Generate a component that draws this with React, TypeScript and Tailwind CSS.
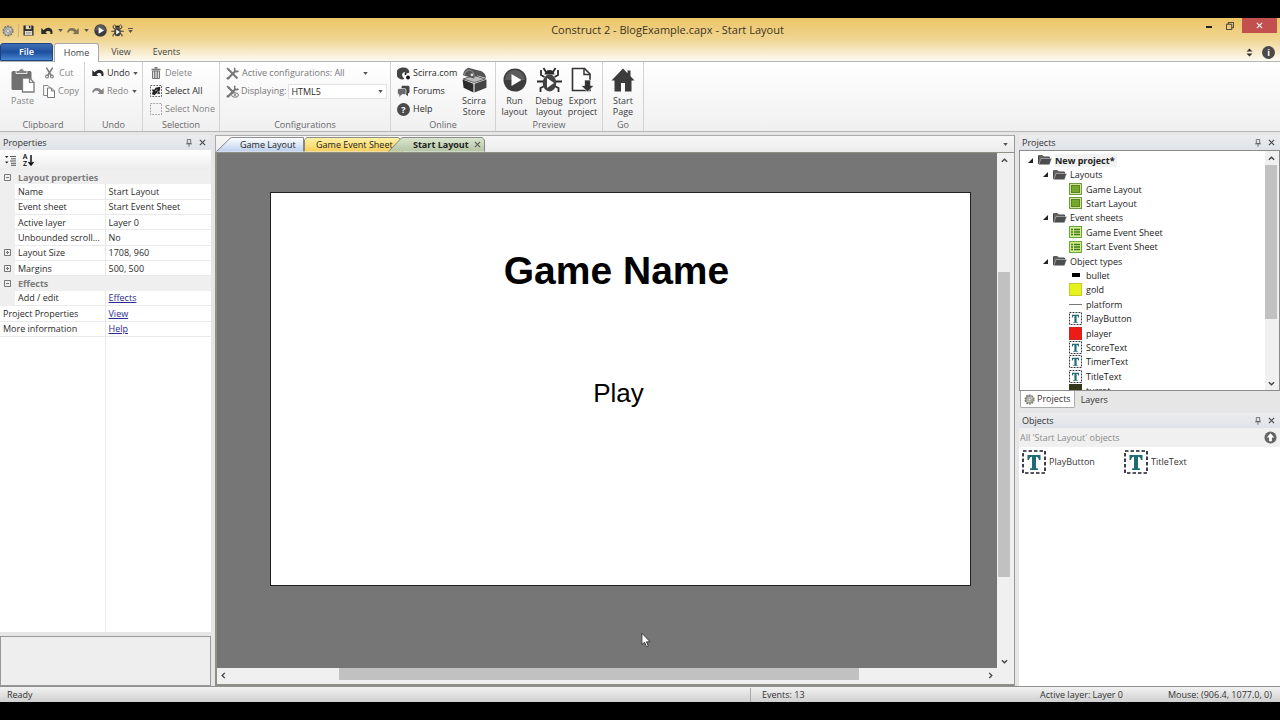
import React from "react";
import clsx from "clsx";

type IconProps = { className?: string };

function GearIcon({ className }: IconProps) {
  return (
    <svg viewBox="0 0 16 16" className={className}>
      <circle cx="8" cy="8" r="6.2" fill="#b5b5b0" stroke="#77756c" strokeWidth="2.4" strokeDasharray="2.4 1.5" />
      <circle cx="8" cy="8" r="5.4" fill="#c9c9c6" stroke="#7c7c78" strokeWidth="0.8" />
      <path d="M4 10a4.6 4.6 0 0 1 6-6M8 12.500a4.600 4.600 0 0 0 4-5" fill="none" stroke="#8b8b88" strokeWidth="1.300" />
      <circle cx="8" cy="8" r="2" fill="#f4f4f4" stroke="#777" strokeWidth="0.9" />
    </svg>
  );
}

function SaveIcon({ className }: IconProps) {
  return (
    <svg viewBox="0 0 12 12" className={className}>
      <path d="M0.500 0.500h10l1 1v10h-11z" fill="#2b2b2b" />
      <rect x="3" y="0.500" width="6" height="4" fill="#e7d8ae" />
      <rect x="6.500" y="1" width="1.500" height="2.500" fill="#2b2b2b" />
      <rect x="2" y="6.500" width="8" height="4.500" fill="#ece6d6" />
      <path d="M3 8h6M3 9.700h6" stroke="#777" strokeWidth="0.7" />
    </svg>
  );
}

function UndoIcon({ className }: IconProps) {
  return (
    <svg viewBox="0 0 12 8" className={className}>
      <path
        d="M0.300 1v6h6L4.500 5.300C5.800 3.800 8 3.500 9 4.600c0.500 0.600 0.500 1.500 0.300 2.500h2.100C12 4 11 1.500 8.600 1 6.300 0.500 4 1.500 2.600 3.300z"
        fill="currentColor"
      />
    </svg>
  );
}

function RedoIcon({ className }: IconProps) {
  return (
    <svg viewBox="0 0 12 8" className={className}>
      <path
        d="M11.700 1v6h-6L7.500 5.300C6.200 3.800 4 3.500 3 4c-0.800 0.400-1.300 1.200-2 2.200L0.200 4.500C1 2.500 2.500 1.200 4.400 1 6.300 0.700 8 1.500 9.400 3.300z"
        fill="currentColor"
      />
    </svg>
  );
}

function PlayIcon({ className }: IconProps) {
  return (
    <svg viewBox="0 0 24 24" className={className}>
      <circle cx="12" cy="12" r="11.500" fill="#3d3d3d" />
      <path d="M2 12a10 10 0 0 1 20 0z" fill="#5c5c5c" />
      <path d="M8.500 6v12l10-6z" fill="#fff" />
    </svg>
  );
}

function BugIcon({ className }: IconProps) {
  return (
    <svg viewBox="0 0 26 26" className={className}>
      <g fill="none" stroke="#2b2b2b" strokeWidth="1.800">
        <path d="M8 10 4.500 8V3M18 10l3.500-2V3M7 14.500H0.500M19 14.500h6.500M8 19l-4 2v4M18 19l4 2v4M9.500 5 7 1M16.500 5 19 1" />
      </g>
      <ellipse cx="13" cy="16" rx="6.800" ry="8.500" fill="#444" />
      <path d="M8 7.500a5 4.500 0 0 1 10 0z" fill="#2b2b2b" />
      <path d="M10.500 11v10l7-5z" fill="#fff" />
    </svg>
  );
}

function PasteIcon({ className }: IconProps) {
  return (
    <svg viewBox="0 0 24 25" className={className}>
      <path d="M2 3h17a1.500 1.500 0 0 1 1.500 1.500V22H2A1.500 1.500 0 0 1 0.500 20.500v-16A1.500 1.500 0 0 1 2 3z" fill="#707070" />
      <path d="M5 5.500V2.500h3a2.600 2.600 0 0 1 5 0h3v3z" fill="#858585" stroke="#fff" strokeWidth="0.800" />
      <path d="M11.500 10h7l4.500 4.500v9.500H11.500z" fill="#fff" stroke="#7b7b7b" strokeWidth="1.300" />
      <path d="M18.500 10v4.500H23" fill="none" stroke="#7b7b7b" strokeWidth="1.200" />
    </svg>
  );
}

function CutIcon({ className }: IconProps) {
  return (
    <svg viewBox="0 0 10 13" className={className}>
      <path d="M1.500 0.500 6.800 9M8.500 0.500 3.200 9" stroke="#777" strokeWidth="1.600" />
      <circle cx="2.300" cy="10.500" r="1.600" fill="none" stroke="#777" strokeWidth="1.200" />
      <circle cx="7.700" cy="10.500" r="1.600" fill="none" stroke="#777" strokeWidth="1.200" />
    </svg>
  );
}

function CopyIcon({ className }: IconProps) {
  return (
    <svg viewBox="0 0 12 13" className={className}>
      <path d="M4 10.500H0.600v-10H5L7.500 3" fill="none" stroke="#888" />
      <path d="M4.500 3h4L11.500 6v6.500h-7z" fill="#fff" stroke="#777" />
      <path d="M8.500 3v3h3" fill="none" stroke="#777" />
    </svg>
  );
}

function TrashIcon({ className }: IconProps) {
  return (
    <svg viewBox="0 0 10 12" className={className}>
      <path d="M3.500 0.700h3M0.500 2.500h9" stroke="#777" strokeWidth="1.400" />
      <path d="M1.500 4h7v7.500h-7z" fill="#ddd" stroke="#777" />
      <path d="M3.700 4v7M6.300 4v7" stroke="#777" strokeWidth="1.200" />
    </svg>
  );
}

function SelectIcon({ className, filled }: IconProps & { filled?: boolean }) {
  return (
    <svg viewBox="0 0 13 13" className={className}>
      <rect x="0.500" y="0.500" width="12" height="12" fill="none" stroke={filled ? "#555" : "#999"} strokeDasharray="2 1.200" />
      {filled && <path d="M2 5h3l1-2 5-1v3l-1 2 1 3-4-1-2 2-3-1 1-3z" fill="#222" />}
      {filled && <path d="M5.500 6.500 8 5M8 8.500l1-2" stroke="#ddd" strokeWidth="0.800" />}
    </svg>
  );
}

function ToolsIcon({ className, eye }: IconProps & { eye?: boolean }) {
  return (
    <svg viewBox="0 0 13 13" className={className}>
      <path d="M2.500 2.500 11.500 11.500" stroke="#777" strokeWidth="2" />
      <path d="M0.500 1.500 1.500 0.500 4 2.500 2.500 4z" fill="#777" />
      <path d="M9.500 4 2.500 11" stroke="#777" strokeWidth="2.200" />
      <path d="M9 0.700a3 3 0 0 0 0 3.300 3 3 0 0 0 3.500 0" fill="none" stroke="#777" strokeWidth="1.600" />
      <circle cx="2" cy="11.300" r="1.400" fill="#777" />
      {eye && <ellipse cx="9" cy="10" rx="3.500" ry="2.200" fill="#eee" stroke="#777" />}
      {eye && <circle cx="9" cy="10" r="1" fill="#777" />}
    </svg>
  );
}

function ScirraIcon({ className }: IconProps) {
  return (
    <svg viewBox="0 0 13 13" className={className}>
      <path d="M6.500 0.500a6 6 0 0 1 6 5L9.500 6.500 7 5 5 7l0.500 2.500 2 2.500A6 6 0 1 1 6.500 0.500z" fill="#444" />
      <circle cx="8.500" cy="7" r="1" fill="#111" />
      <circle cx="11" cy="10.500" r="1.900" fill="#111" />
    </svg>
  );
}

function ForumIcon({ className }: IconProps) {
  return (
    <svg viewBox="0 0 13 13" className={className}>
      <path d="M5 0.700h6q1.500 0 1.500 1.500v4.500q0 1.500-1.500 1.500v3L8 8.500H4.500V2z" fill="#444" />
      <path d="M2 3.500h5.500q1.500 0 1.500 1.500v3q0 1.500-1.500 1.500H5L2 12.500V9.500Q0.500 9.500 0.500 8V5Q0.500 3.500 2 3.500z" fill="#6a6a6a" stroke="#fff" strokeWidth="0.600" />
    </svg>
  );
}

// round dark badge with a single glyph inside
function Badge({ glyph }: { glyph: string }) {
  return (
    <span className="flex h-[13px] w-[13px] shrink-0 items-center justify-center rounded-full bg-[#4a4a4a] text-[9px] leading-none font-bold text-white">
      {glyph}
    </span>
  );
}

function ChestIcon({ className }: IconProps) {
  return (
    <svg viewBox="0 0 24 25" className={className}>
      <path d="M0.500 12 11 16v8.500L1.500 20z" fill="#2c2c2c" />
      <path d="M12 16l11.500-4v8L12 24.500z" fill="#444" />
      <path d="M1 11.500 11.500 8l11 3.500L12 15z" fill="#bbb" stroke="#333" strokeWidth="0.700" />
      <path d="M1 8C1 5 3 2 6 0.800l10 2.500c4 0.700 7 3 7 7.200l-7.500-2C13.500 8 12 9 11.500 11z" fill="#555" />
      <path d="M2 8c1-4 3-5 5.500-5 3 1 4.500 3.500 4 7" fill="none" stroke="#888" />
      <circle cx="9.500" cy="7.500" r="1.300" fill="#ddd" />
    </svg>
  );
}

function ExportIcon({ className }: IconProps) {
  return (
    <svg viewBox="0 0 24 25" className={className}>
      <path d="M1.500 1h12l5.500 5.500V23H1.500z" fill="#fff" stroke="#333" strokeWidth="1.600" />
      <path d="M13 1v6h6" fill="none" stroke="#333" strokeWidth="1.500" />
      <path d="M13.500 12.500h6v5.500H23l-6.500 6.500L10 18h3.500z" fill="#333" stroke="#fff" strokeWidth="0.700" />
    </svg>
  );
}

function HomeIcon({ className }: IconProps) {
  return (
    <svg viewBox="0 0 24 24" className={className}>
      <path d="M12 0.500 0.500 12.500h3V23.500h6.500V15h4v8.500h6.500v-11h3L19.500 8.300V2.500h-3v2.700z" fill="#3b3b3b" />
    </svg>
  );
}

function FolderIcon({ className }: IconProps) {
  return (
    <svg viewBox="0 0 14 10" className={className}>
      <path d="M0.500 9V0.700h4l1 1.300h6v2" fill="#666" stroke="#444" />
      <path d="M3 3.500h10.700L11.500 9.700H0.700z" fill="#4d4d4d" stroke="#ddd" strokeWidth="0.500" />
    </svg>
  );
}

function LayoutIcon({ className }: IconProps) {
  return (
    <svg viewBox="0 0 13 12" className={className}>
      <rect x="0.500" y="0.500" width="12" height="11" fill="#cfe59a" stroke="#6f9a42" />
      <rect x="2.500" y="2.500" width="8" height="7" fill="#77a82c" stroke="#5a8524" />
    </svg>
  );
}

function SheetIcon({ className }: IconProps) {
  return (
    <svg viewBox="0 0 13 12" className={className}>
      <rect x="0.500" y="0.500" width="12" height="11" fill="#d3ec8f" stroke="#6aa63a" />
      <path d="M2 3.500h2M5 3.500h6M2 6h2M5 6h6M2 8.500h2M5 8.500h6" stroke="#3d7a16" strokeWidth="1.300" />
    </svg>
  );
}

function TextIcon({ className }: IconProps) {
  return (
    <svg viewBox="0 0 24 24" className={className}>
      <rect x="1" y="1" width="22" height="22" fill="#fff" stroke="#1c1c2b" strokeWidth="1.700" strokeDasharray="3.500 2" />
      <path d="M5.500 5h13v5h-1.500c-0.500-2-1-3.300-3-3.300v10.800c0 0.800 0.500 1 2 1V20H8v-1.500c1.500 0 2-0.200 2-1V6.700c-2 0-2.500 1.300-3 3.300H5.500z" fill="#1f6b74" />
    </svg>
  );
}

function PinIcon() {
  return (
    <svg viewBox="0 0 7 9" className="h-[8px] w-[6px]">
      <path d="M1.500 0.500h4v4.500h-4zM0 5.500h7M3.500 5.500V9" fill="none" stroke="#555" strokeWidth="0.900" />
    </svg>
  );
}

function CloseIcon({ className }: IconProps) {
  return (
    <svg viewBox="0 0 8 8" className={className}>
      <path d="M1 1l6 6M7 1 1 7" stroke="currentColor" strokeWidth="1.200" />
    </svg>
  );
}

function Caret() {
  return (
    <svg viewBox="0 0 6 4" className="h-[3px] w-[5px] shrink-0">
      <path d="M0 0h6L3 4z" fill="#555" />
    </svg>
  );
}

const chevrons = {
  up: "M1 5.500 4 2.500l3 3",
  down: "M1 2.500l3 3 3-3",
  left: "M5.500 1l-3 3 3 3",
  right: "M2.500 1l3 3-3 3",
};

function ScrollButton({ dir }: { dir: keyof typeof chevrons }) {
  return (
    <button aria-label={`Scroll ${dir}`} className="flex h-[14px] w-[13px] shrink-0 items-center justify-center">
      <svg viewBox="0 0 8 8" className="h-[7px] w-[7px]">
        <path d={chevrons[dir]} fill="none" stroke="#444" strokeWidth="1.600" />
      </svg>
    </button>
  );
}

function PanelHeader({ title }: { title: string }) {
  return (
    <div className="flex h-[15px] shrink-0 items-center bg-linear-to-b from-[#ececee] to-[#dfe3e8] px-[3px] text-[#333]">
      <h2 className="flex-1">{title}</h2>
      <button aria-label={`Pin ${title}`} className="mr-[7px]">
        <PinIcon />
      </button>
      <button aria-label={`Close ${title}`} className="mr-[2px] text-[#444]">
        <CloseIcon className="h-[7px] w-[7px]" />
      </button>
    </div>
  );
}

function TitleBar() {
  return (
    <div className="flex h-[25px] items-center">
      <div className="flex w-[180px] items-center pl-[2px]">
        <GearIcon className="h-[12px] w-[12px]" />
        <span className="mx-[4px] h-[13px] w-px bg-[#cdb478]" />
        <button aria-label="Save">
          <SaveIcon className="h-[11px] w-[11px]" />
        </button>
        <button aria-label="Undo" className="ml-[7px] flex items-center gap-[5px] text-[#2b2b2b]">
          <UndoIcon className="h-[8px] w-[12px]" />
          <Caret />
        </button>
        <button aria-label="Redo" className="ml-[4px] flex items-center gap-[5px] text-[#7d7250]">
          <RedoIcon className="h-[8px] w-[12px]" />
          <Caret />
        </button>
        <button aria-label="Run layout" className="ml-[5px]">
          <PlayIcon className="h-[13px] w-[13px]" />
        </button>
        <button aria-label="Debug layout" className="ml-[4px]">
          <BugIcon className="h-[13px] w-[13px]" />
        </button>
        <button aria-label="Customize toolbar" className="ml-[4px] flex flex-col items-center gap-px">
          <span className="h-px w-[5px] bg-[#555]" />
          <Caret />
        </button>
      </div>
      <h1 className="flex-1 text-center text-[11px] text-[#3d3522]">Construct 2 - BlogExample.capx - Start Layout</h1>
      <div className="flex w-[125px] items-start justify-end self-stretch">
        <button aria-label="Minimize" className="mt-[8px] mr-[14px] h-[2px] w-[6px] bg-[#222]" />
        <button aria-label="Restore" className="mt-[4px] mr-[8px]">
          <svg viewBox="0 0 9 9" className="h-[8px] w-[8px]">
            <path d="M0.500 2.500h6v6h-6zM2.500 2.500v-2h6v6h-2" fill="none" stroke="#333" />
          </svg>
        </button>
        <button aria-label="Close" className="mr-[3px] flex h-[15px] w-[35px] items-center justify-center bg-[#c2504e] text-white">
          <CloseIcon className="h-[7px] w-[7px]" />
        </button>
      </div>
    </div>
  );
}

function RibbonTabs() {
  return (
    <nav className="flex h-[18px] items-end text-[#444]">
      <button className="h-[18px] w-[53px] rounded-t-[3px] border border-[#1d4480] bg-linear-to-b from-[#3f6fb5] via-[#1e4f9c] to-[#4a86cf] font-semibold text-white">
        File
      </button>
      <button className="z-10 -mb-px ml-px h-[19px] w-[45px] rounded-t-[3px] border border-b-0 border-[#a9a9a9] bg-white">Home</button>
      <button className="h-[18px] w-[44px]">View</button>
      <button className="h-[18px] w-[47px]">Events</button>
      <div className="flex flex-1 items-center justify-end gap-[9px] self-center pr-[5px]">
        <button aria-label="Minimize ribbon">
          <svg viewBox="0 0 7 9" className="h-[9px] w-[7px]">
            <path d="M0.500 3.500 3.500 0.500l3 3zM0.500 5.500l3 3 3-3z" fill="#333" />
          </svg>
        </button>
        <button aria-label="About">
          <Badge glyph="i" />
        </button>
      </div>
    </nav>
  );
}

function RibbonGroup({ title, className, children }: { title: string; className: string; children: React.ReactNode }) {
  return (
    <section className={clsx("flex shrink-0 flex-col border-r border-[#d3d3d3]", className)}>
      <div className="flex min-h-0 flex-1 pt-[2px]">{children}</div>
      <h2 className="shrink-0 text-center leading-[13px] text-[#666]">{title}</h2>
    </section>
  );
}

function SmallButton({ icon, label, dark, caret }: { icon: React.ReactNode; label: string; dark?: boolean; caret?: boolean }) {
  return (
    <button className={clsx("flex h-[18px] items-center gap-[3px] whitespace-nowrap", dark ? "text-[#2b2b2b]" : "text-[#858585]")}>
      {icon}
      {label}
      {caret && <Caret />}
    </button>
  );
}

function BigButton({ icon, lines, className }: { icon: React.ReactNode; lines: string[]; className: string }) {
  return (
    <button className={clsx("flex shrink-0 flex-col items-center self-start pt-[3px] text-[#3b3b3b]", className)}>
      {icon}
      <span className="mt-[2px] leading-[11px]">
        {lines.map((line) => (
          <span key={line} className="block">
            {line}
          </span>
        ))}
      </span>
    </button>
  );
}

function Ribbon() {
  return (
    <div className="flex h-[71px] border-y border-[#b5b5b5] bg-linear-to-b from-white to-[#f0f0f1]">
      <RibbonGroup title="Clipboard" className="w-[85px] pl-[2px]">
        <button className="flex w-[41px] flex-col items-center self-start pt-[4px] text-[#858585]">
          <PasteIcon className="h-[25px] w-[24px]" />
          <span className="mt-[2px] leading-[11px]">Paste</span>
        </button>
        <div className="flex flex-col">
          <SmallButton icon={<CutIcon className="mr-[2px] ml-[2px] h-[12px] w-[9px]" />} label="Cut" />
          <SmallButton icon={<CopyIcon className="h-[13px] w-[12px]" />} label="Copy" />
        </div>
      </RibbonGroup>
      <RibbonGroup title="Undo" className="w-[58px]">
        <div className="flex flex-col pl-[7px]">
          <SmallButton icon={<UndoIcon className="h-[8px] w-[12px]" />} label="Undo" dark caret />
          <SmallButton icon={<RedoIcon className="h-[8px] w-[12px]" />} label="Redo" caret />
        </div>
      </RibbonGroup>
      <RibbonGroup title="Selection" className="w-[77px]">
        <div className="flex flex-col pl-[7px]">
          <SmallButton icon={<TrashIcon className="mx-px h-[12px] w-[10px]" />} label="Delete" />
          <SmallButton icon={<SelectIcon filled className="h-[12px] w-[12px]" />} label="Select All" dark />
          <SmallButton icon={<SelectIcon className="h-[12px] w-[12px]" />} label="Select None" />
        </div>
      </RibbonGroup>
      <RibbonGroup title="Configurations" className="w-[171px]">
        <div className="flex flex-1 flex-col pr-[3px] pl-[6px]">
          <button className="flex h-[18px] items-center gap-[3px] pr-[19px] text-[#777]">
            <ToolsIcon className="h-[13px] w-[13px]" />
            <span className="flex-1 text-left">Active configurations: All</span>
            <Caret />
          </button>
          <div className="flex h-[18px] items-center text-[#777]">
            <ToolsIcon eye className="mr-[2px] h-[13px] w-[13px]" />
            <label htmlFor="displaying">Displaying:</label>
            <div className="ml-[2px] flex h-[15px] flex-1 items-center border border-[#e2e2e2] bg-white pr-[3px]">
              <select id="displaying" className="h-full flex-1 appearance-none pl-[2px] text-[#2b2b2b]">
                <option>HTML5</option>
              </select>
              <Caret />
            </div>
          </div>
        </div>
      </RibbonGroup>
      <RibbonGroup title="Online" className="w-[105px]">
        <div className="flex w-[68px] flex-col pl-[6px]">
          <SmallButton icon={<ScirraIcon className="h-[13px] w-[13px]" />} label="Scirra.com" dark />
          <SmallButton icon={<ForumIcon className="h-[13px] w-[13px]" />} label="Forums" dark />
          <SmallButton icon={<Badge glyph="?" />} label="Help" dark />
        </div>
        <BigButton icon={<ChestIcon className="h-[26px] w-[25px]" />} lines={["Scirra", "Store"]} className="w-[30px]" />
      </RibbonGroup>
      <RibbonGroup title="Preview" className="w-[107px]">
        <BigButton icon={<PlayIcon className="h-[26px] w-[24px]" />} lines={["Run", "layout"]} className="w-[37px]" />
        <BigButton icon={<BugIcon className="h-[26px] w-[27px]" />} lines={["Debug", "layout"]} className="w-[32px]" />
        <BigButton icon={<ExportIcon className="h-[26px] w-[24px]" />} lines={["Export", "project"]} className="w-[35px]" />
      </RibbonGroup>
      <RibbonGroup title="Go" className="w-[41px]">
        <BigButton icon={<HomeIcon className="h-[26px] w-[24px]" />} lines={["Start", "Page"]} className="w-[40px]" />
      </RibbonGroup>
    </div>
  );
}

type Property = {
  name: string;
  value?: string;
  kind?: "section" | "expandable" | "link" | "wide";
};

const properties: Property[] = [
  { name: "Layout properties", kind: "section" },
  { name: "Name", value: "Start Layout" },
  { name: "Event sheet", value: "Start Event Sheet" },
  { name: "Active layer", value: "Layer 0" },
  { name: "Unbounded scroll...", value: "No" },
  { name: "Layout Size", value: "1708, 960", kind: "expandable" },
  { name: "Margins", value: "500, 500", kind: "expandable" },
  { name: "Effects", kind: "section" },
  { name: "Add / edit", value: "Effects", kind: "link" },
  { name: "Project Properties", value: "View", kind: "wide" },
  { name: "More information", value: "Help", kind: "wide" },
];

function Expander({ name, open }: { name: string; open?: boolean }) {
  return (
    <button aria-label={`Toggle ${name}`} className="mx-auto block">
      <svg viewBox="0 0 7 7" className="h-[7px] w-[7px]">
        <path d="M0.500 0.500h6v6h-6zM2 3.500h3" fill="none" stroke="#777" />
        {!open && <path d="M3.500 2v3" stroke="#777" />}
      </svg>
    </button>
  );
}

function PropertyRow({ row }: { row: Property }) {
  if (row.kind === "section") {
    return (
      <tr className="bg-[#efefef]">
        <td>
          <Expander name={row.name} open />
        </td>
        <th colSpan={2} className="pl-[3px] text-left font-bold text-[#7b7b7b]">
          {row.name}
        </th>
      </tr>
    );
  }
  const isLink = row.kind === "link" || row.kind === "wide";
  return (
    <tr>
      {row.kind !== "wide" && (
        <td className="bg-[#efefef]">{row.kind === "expandable" && <Expander name={row.name} />}</td>
      )}
      <td
        colSpan={row.kind === "wide" ? 2 : 1}
        className="overflow-hidden border-r border-b border-[#e9e9e9] pl-[3px] whitespace-nowrap"
      >
        {row.name}
      </td>
      <td className="border-b border-[#e9e9e9] pl-[3px]">
        {isLink ? (
          <a href="#" className="text-[#2b2b8f] underline">
            {row.value}
          </a>
        ) : (
          row.value
        )}
      </td>
    </tr>
  );
}

function PropertiesPanel() {
  return (
    <aside className="flex w-[211px] shrink-0 flex-col">
      <PanelHeader title="Properties" />
      <div className="flex h-[20px] shrink-0 items-center gap-[6px] bg-linear-to-b from-white to-[#ececec] pl-[5px]">
        <button aria-label="Categorized">
          <svg viewBox="0 0 11 11" className="h-[11px] w-[11px]">
            <path d="M0 1h3.500L1.700 3zM0 6.500h3.500L1.700 8.500z" fill="#222" />
            <path d="M5 1.500h6M6 3.800h5M5 6h6M6 8.300h5M6 10.300h5" stroke="#555" />
          </svg>
        </button>
        <button aria-label="Sort alphabetically" className="flex items-center">
          <span className="flex w-[6px] flex-col text-[7px] leading-[7px] font-semibold">
            <span>A</span>
            <span>Z</span>
          </span>
          <svg viewBox="0 0 6 11" className="h-[11px] w-[6px]">
            <path d="M3 0v9M0.500 7 3 10l2.500-3" fill="none" stroke="#111" strokeWidth="1.500" />
          </svg>
        </button>
      </div>
      <div className="flex min-h-0 flex-1 flex-col bg-white text-[#2b2b2b]">
        <table className="h-[167px] w-full table-fixed border-collapse leading-[13px]">
          <colgroup>
            <col className="w-[15px]" />
            <col className="w-[90px]" />
            <col />
          </colgroup>
          <tbody>
            {properties.map((row) => (
              <PropertyRow key={row.name} row={row} />
            ))}
          </tbody>
        </table>
        <div className="w-[106px] flex-1 border-r border-[#ececec]" />
      </div>
      <div className="mt-[4px] h-[50px] shrink-0 border border-[#999] bg-[#eee]" />
    </aside>
  );
}

const docTabs = [
  { name: "Game Layout", from: "#ffffff", to: "#bcd0ee", shape: "M0.500 15.500 14 1.500Q15 0.500 17 0.500H87.500V15.500", box: "w-[88px] pl-[24px]" },
  { name: "Game Event Sheet", from: "#fff3a8", to: "#f7cf5c", shape: "M0.500 15.500V3L3 0.500H95L99.500 4V15.500", box: "w-[99px] pl-[12px]" },
  { name: "Start Layout", from: "#dbe6cf", to: "#b5c5a4", shape: "M0.500 15.500 13 1.500Q14 0.500 16 0.500H94L96.500 3V15.500", box: "-ml-[15px] w-[97px] pl-[25px] font-bold" },
];

function DocumentTabs() {
  return (
    <div className="flex h-[17px] shrink-0 items-end border-t border-l border-[#aaa] bg-linear-to-b from-[#f7f7f7] to-[#ececec]">
      {docTabs.map((tab, i) => (
        <div key={tab.name} className={clsx("relative flex h-[15px] shrink-0 items-center whitespace-nowrap", tab.box)}>
          <svg viewBox={`0 0 ${[88, 100, 97][i]} 16`} preserveAspectRatio="none" className="absolute inset-0 h-full w-full">
            <defs>
              <linearGradient id={`tab${i}`} x2="0" y2="1">
                <stop offset="0" stopColor={tab.from} />
                <stop offset="1" stopColor={tab.to} />
              </linearGradient>
            </defs>
            <path d={tab.shape} fill={`url(#tab${i})`} stroke="#77797c" strokeWidth="0.900" />
          </svg>
          <button className="relative leading-[13px] text-[#222]">{tab.name}</button>
          {i === 2 && (
            <button aria-label="Close tab" className="relative mr-[4px] ml-auto text-[#555]">
              <CloseIcon className="h-[7px] w-[7px]" />
            </button>
          )}
        </div>
      ))}
      <button aria-label="Open documents" className="mr-[6px] ml-auto self-center">
        <Caret />
      </button>
    </div>
  );
}

function Workspace() {
  return (
    <main className="mx-[4px] flex min-w-0 flex-1 flex-col border-r border-[#999]">
      <DocumentTabs />
      <div className="flex min-h-0 flex-1 flex-col border-t border-b-2 border-l-2 border-[#8f8f88] bg-[#f0f0f0]">
        <div className="flex min-h-0 flex-1">
          <div className="relative flex flex-1 bg-[#767676] pt-[39px] pr-[26px] pb-[82px] pl-[53px]">
            <div className="flex flex-1 flex-col items-center border border-[#222] bg-white pt-[55px] pr-[4px] font-['Liberation_Sans',Arial,sans-serif] text-black">
              <p className="pr-[4px] text-[39px] leading-[46px] font-bold">Game Name</p>
              <p className="mt-[84px] text-[26px] leading-[30px]">Play</p>
            </div>
            <svg viewBox="0 0 11 17" className="absolute top-[93%] left-[54%] ml-[3px] h-[16px] w-[10px]">
              <path d="M1 1v12.500l3-2.500 2 5 2-1-2-4.500h4z" fill="#fff" stroke="#333" />
            </svg>
          </div>
          <div className="flex w-[17px] flex-col bg-[#f0f0f0] pl-px">
            <ScrollButton dir="up" />
            <div className="h-[105px]" />
            <div className="w-[12px] flex-1 bg-[#c1c1c1]" />
            <div className="h-[77px]" />
            <ScrollButton dir="down" />
          </div>
        </div>
        <div className="flex h-[16px] items-start pr-[17px]">
          <ScrollButton dir="left" />
          <div className="w-[109px]" />
          <div className="h-[12px] flex-1 bg-[#c1c1c1]" />
          <div className="w-[125px]" />
          <ScrollButton dir="right" />
        </div>
      </div>
    </main>
  );
}

type Node = { name: string; level: number; icon?: React.ReactNode };

const layoutIcon = <LayoutIcon className="h-[12px] w-[13px]" />;
const sheetIcon = <SheetIcon className="h-[12px] w-[13px]" />;
const textIcon = <TextIcon className="h-[13px] w-[13px]" />;

const tree: Node[] = [
  { name: "New project*", level: 0 },
  { name: "Layouts", level: 1 },
  { name: "Game Layout", level: 2, icon: layoutIcon },
  { name: "Start Layout", level: 2, icon: layoutIcon },
  { name: "Event sheets", level: 1 },
  { name: "Game Event Sheet", level: 2, icon: sheetIcon },
  { name: "Start Event Sheet", level: 2, icon: sheetIcon },
  { name: "Object types", level: 1 },
  { name: "bullet", level: 2, icon: <span className="h-[4px] w-[8px] bg-black" /> },
  { name: "gold", level: 2, icon: <span className="h-[13px] w-[13px] border border-[#c5cc2a] bg-[#e6f21c]" /> },
  { name: "platform", level: 2, icon: <span className="h-px w-[13px] bg-[#777]" /> },
  { name: "PlayButton", level: 2, icon: textIcon },
  { name: "player", level: 2, icon: <span className="h-[13px] w-[13px] border border-[#c92a20] bg-[#f01a14]" /> },
  { name: "ScoreText", level: 2, icon: textIcon },
  { name: "TimerText", level: 2, icon: textIcon },
  { name: "TitleText", level: 2, icon: textIcon },
  { name: "turret", level: 2, icon: <span className="h-[13px] w-[13px] bg-[#33361a]" /> },
];

const indent = ["pl-[8px]", "pl-[23px]", "pl-[49px]"];

function TreeRow({ node }: { node: Node }) {
  return (
    <li className={clsx("flex items-center whitespace-nowrap", indent[node.level])}>
      {node.level < 2 && (
        <button aria-label={`Collapse ${node.name}`} className="mr-[5px]">
          <svg viewBox="0 0 5 5" className="h-[5px] w-[5px]">
            <path d="M5 0v5H0z" fill="#222" />
          </svg>
        </button>
      )}
      {node.icon ? (
        <span className="mr-[4px] flex w-[13px] justify-center">{node.icon}</span>
      ) : (
        <FolderIcon className="mr-[3px] h-[10px] w-[14px]" />
      )}
      <span className={clsx(node.level === 0 && "bg-[#f2f2f2] pr-[2px] font-bold")}>{node.name}</span>
    </li>
  );
}

function RightPanels() {
  return (
    <aside className="flex w-[261px] shrink-0 flex-col">
      <PanelHeader title="Projects" />
      <div className="flex h-[241px] shrink-0 overflow-hidden border border-[#8c8c8c] bg-white">
        <ul className="grid h-[247px] flex-1 auto-rows-fr pt-[2px] leading-[13px] text-[#222]">
          {tree.map((node) => (
            <TreeRow key={node.name} node={node} />
          ))}
        </ul>
        <div className="flex w-[14px] flex-col bg-[#f0f0f0]">
          <ScrollButton dir="up" />
          <div className="h-[154px] w-[12px] bg-[#c1c1c1]" />
          <div className="flex-1" />
          <ScrollButton dir="down" />
        </div>
      </div>
      <div className="flex h-[22px] shrink-0 items-start text-[#333]">
        <button className="ml-px flex h-[17px] items-center gap-[2px] rounded-b-[2px] border border-t-0 border-[#aaa] bg-white px-[3px]">
          <GearIcon className="h-[11px] w-[11px]" />
          Projects
        </button>
        <button className="h-[17px] px-[6px]">Layers</button>
      </div>
      <PanelHeader title="Objects" />
      <div className="flex h-[19px] shrink-0 items-center justify-between bg-[#f0f0f0] pr-[3px] pl-px text-[#8c8c8c]">
        All 'Start Layout' objects
        <button aria-label="Up one level">
          <svg viewBox="0 0 14 14" className="h-[13px] w-[13px]">
            <circle cx="7" cy="7" r="6.500" fill="#666" />
            <path d="M7 2.500 3 7h2.500v4h3V7H11z" fill="#fff" />
          </svg>
        </button>
      </div>
      <div className="flex flex-1 items-start bg-white pt-[3px] pl-[3px] text-[#333]">
        {["PlayButton", "TitleText"].map((name) => (
          <button key={name} className="flex w-[102px] items-center gap-[3px]">
            <TextIcon className="h-[24px] w-[24px]" />
            {name}
          </button>
        ))}
      </div>
    </aside>
  );
}

function StatusBar() {
  return (
    <footer className="flex h-[16px] shrink-0 items-center border-t border-[#8f8f8f] bg-linear-to-b from-[#f2f2f2] to-[#d0d0d0] pt-px text-[#333]">
      <span className="flex-1 pl-[7px]">Ready</span>
      <span className="w-[290px] border-l border-[#aaa] pl-[11px]">Events: 13</span>
      <span className="w-[128px]">Active layer: Layer 0</span>
      <span className="w-[112px]">Mouse: (906.4, 1077.0, 0)</span>
    </footer>
  );
}

export default function App() {
  return (
    <div className="flex h-screen flex-col bg-black py-[18px] font-['Open_Sans','Noto_Sans',sans-serif] text-[9px]">
      <header className="shrink-0 bg-linear-to-b from-[#ecc566] via-[#f0d592] to-[#fdfaf3]">
        <TitleBar />
        <RibbonTabs />
      </header>
      <Ribbon />
      <div className="flex min-h-0 flex-1 bg-[#e6e6e6] pt-[3px]">
        <PropertiesPanel />
        <Workspace />
        <RightPanels />
      </div>
      <StatusBar />
    </div>
  );
}
